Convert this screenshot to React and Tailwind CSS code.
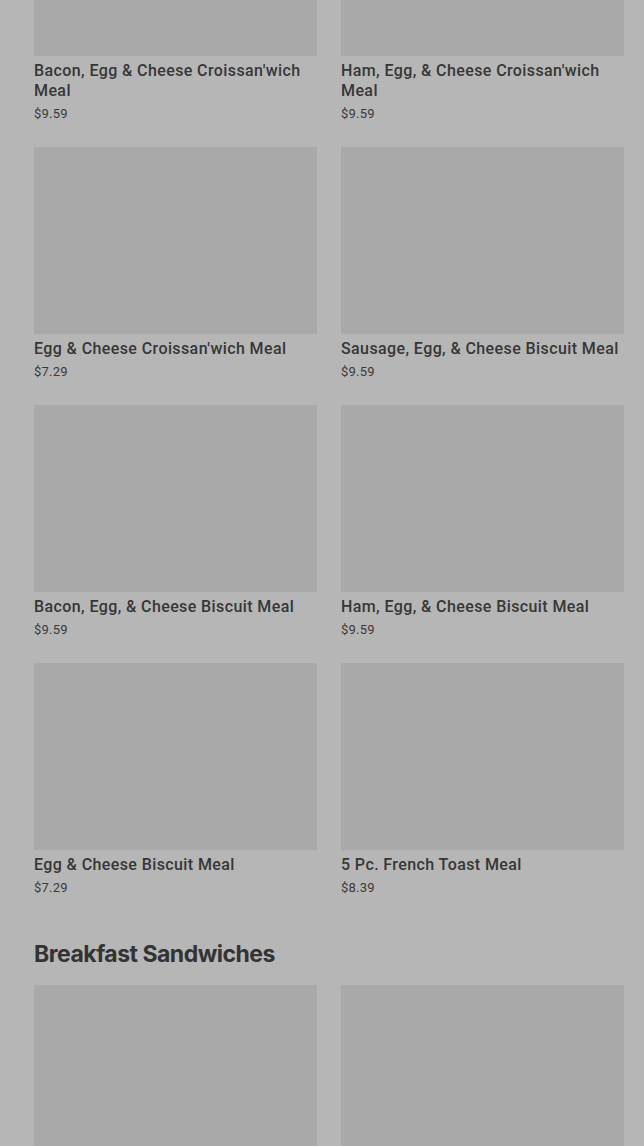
import React from 'react';

const rows = [
  [
    { name: "Bacon, Egg & Cheese Croissan'wich Meal", price: '$9.59' },
    { name: "Ham, Egg, & Cheese Croissan'wich Meal", price: '$9.59' },
  ],
  [
    { name: "Egg & Cheese Croissan'wich Meal", price: '$7.29' },
    { name: 'Sausage, Egg, & Cheese Biscuit Meal', price: '$9.59' },
  ],
  [
    { name: 'Bacon, Egg, & Cheese Biscuit Meal', price: '$9.59' },
    { name: 'Ham, Egg, & Cheese Biscuit Meal', price: '$9.59' },
  ],
  [
    { name: 'Egg & Cheese Biscuit Meal', price: '$7.29' },
    { name: '5 Pc. French Toast Meal', price: '$8.39' },
  ],
];

const MenuCard = ({ item }) => (
  <div className="flex flex-col">
    <div className="h-[187px] bg-[#a9a9a9]" />
    {item && (
      <>
        <p className="mt-[5px] text-[16px] leading-5 font-medium tracking-[0.4px] text-[#363636]">{item.name}</p>
        <p className="mt-[3px] text-[13px] leading-5 tracking-[0.2px] text-[#3a3a3a]">{item.price}</p>
      </>
    )}
  </div>
);

export default function App() {
  return (
    <div
      className="min-h-[1146px] overflow-hidden bg-[#b6b6b6] pl-[34px] pr-[20px]"
      style={{ fontFamily: 'Roboto, "Liberation Sans", sans-serif' }}
    >
      <div className="-mt-[131px] grid grid-cols-2 gap-x-6 gap-y-[23px]">
        {rows.flat().map((item) => (
          <MenuCard key={item.name} item={item} />
        ))}
      </div>

      <h2
        className="mt-[42px] mb-[17px] text-[23px] leading-7 font-bold tracking-[-0.5px] text-[#333]"
        style={{ fontFamily: 'Inter, "Liberation Sans", sans-serif' }}
      >
        Breakfast Sandwiches
      </h2>

      <div className="grid grid-cols-2 gap-x-6">
        <MenuCard />
        <MenuCard />
      </div>
    </div>
  );
}
